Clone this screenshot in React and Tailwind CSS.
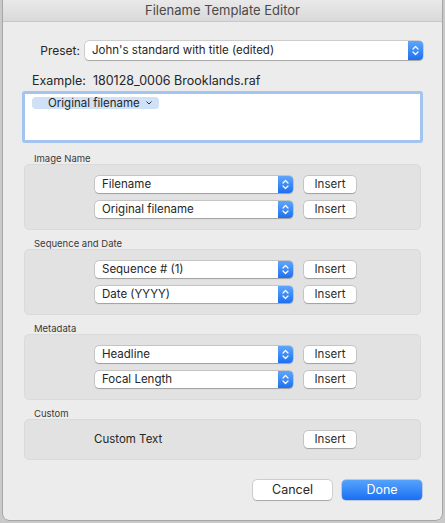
import React from "react";

const groups = [
  { title: "Image Name", rows: ["Filename", "Original filename"] },
  { title: "Sequence and Date", rows: ["Sequence # (1)", "Date (YYYY)"] },
  { title: "Metadata", rows: ["Headline", "Focal Length"] },
];

const Stepper = () => (
  <div className="flex w-[15px] items-center justify-center rounded-r-[4px] bg-gradient-to-b from-[#5ea6fb] to-[#1c6ff0]">
    <svg width="7" height="11" viewBox="0 0 7 11" fill="none">
      <path d="M1 4 L3.5 1.5 L6 4" stroke="white" strokeWidth="1.2" strokeLinecap="round" strokeLinejoin="round" />
      <path d="M1 7 L3.5 9.5 L6 7" stroke="white" strokeWidth="1.2" strokeLinecap="round" strokeLinejoin="round" />
    </svg>
  </div>
);

const Select = ({ label, wide }) => (
  <div
    className={
      "flex items-stretch rounded-[4px] bg-white shadow-[0_0_0_0.5px_rgba(0,0,0,0.22),0_0.5px_1px_rgba(0,0,0,0.2)] " +
      (wide ? "h-[19px] flex-1" : "h-[17px] w-[198px]")
    }
  >
    <span
      className={
        "flex flex-1 items-center truncate pl-[7px] text-[11.5px] text-[#262626] " +
        (wide ? "leading-[19px]" : "leading-[17px]")
      }
    >
      {label}
    </span>
    <Stepper />
  </div>
);

const InsertButton = ({ className = "" }) => (
  <button
    className={
      "h-[17px] w-[52px] rounded-[4px] bg-white text-[11.5px] leading-[17px] text-[#2b2b2b] shadow-[0_0_0_0.5px_rgba(0,0,0,0.22),0_0.5px_1px_rgba(0,0,0,0.2)] " +
      className
    }
  >
    Insert
  </button>
);

const GroupLabel = ({ children }) => (
  <div className="pl-[12px] text-[9.5px] leading-[10px] text-[#3a3a3a]">{children}</div>
);

const App = () => {
  return (
    <div
      className="h-[523px] w-[445px] overflow-hidden bg-[#c9c9c9] px-[3px]"
      style={{ fontFamily: "Inter, 'Noto Sans', sans-serif" }}
    >
      <div className="flex h-[520px] flex-col overflow-hidden rounded-b-[6px] bg-[#ececec] shadow-[0_0_0_0.5px_rgba(0,0,0,0.35)]">
        <div className="flex h-[22px] shrink-0 items-center justify-center border-b border-[#c8c8c8] bg-gradient-to-b from-[#e9e9e9] to-[#d9d9d9] text-[13px] text-[#4a4a4a]">
          Filename Template Editor
        </div>

        <div className="flex flex-col px-[19px]">
          <div className="mt-[19px] flex items-center">
            <span className="w-[63px] pr-[5px] text-right text-[12px] text-[#262626]">Preset:</span>
            <Select label="John's standard with title (edited)" wide />
          </div>

          <div className="mt-[13px] pl-[10px] text-[12.5px] leading-[15px] text-[#262626]">
            Example:&nbsp; 180128_0006 Brooklands.raf
          </div>

          <div className="mt-[3px] h-[52px] rounded-[3px] border-[3px] border-[#a2c4ee] bg-white px-[7px] pt-[3px]">
            <div className="flex">
              <span className="flex h-[12px] items-center gap-[6px] rounded-[4px] bg-[#cfe1f7] pl-[16px] pr-[7px] text-[11.5px] leading-[12px] text-[#262626]">
                Original filename
                <svg width="6" height="4" viewBox="0 0 6 4" fill="none">
                  <path d="M0.8 0.8 L3 3 L5.2 0.8" stroke="#333" strokeWidth="1" strokeLinecap="round" />
                </svg>
              </span>
            </div>
          </div>

          {groups.map((g, i) => (
            <div key={g.title} className={"flex flex-col " + (i === 0 ? "mt-[11px]" : "mt-[9px]")}>
              <GroupLabel>{g.title}</GroupLabel>
              <div className="mx-[2px] flex h-[66px] flex-col justify-center gap-[8px] rounded-[5px] border border-[#dadada] bg-[#e2e2e2]">
                {g.rows.map((r) => (
                  <div key={r} className="flex items-center pl-[70px]">
                    <Select label={r} />
                    <InsertButton className="ml-[11px]" />
                  </div>
                ))}
              </div>
            </div>
          ))}

          <div className="mt-[9px] flex flex-col">
            <GroupLabel>Custom</GroupLabel>
            <div className="mx-[2px] flex h-[41px] items-center rounded-[5px] border border-[#dadada] bg-[#e2e2e2]">
              <span className="ml-[69px] w-[210px] text-[11.5px] text-[#262626]">Custom Text</span>
              <InsertButton />
            </div>
          </div>

          <div className="mt-[20px] flex justify-end gap-[10px] pr-[1px]">
            <button className="h-[20px] w-[79px] rounded-[4px] bg-white text-[12.5px] text-[#262626] shadow-[0_0_0_0.5px_rgba(0,0,0,0.22),0_0.5px_1px_rgba(0,0,0,0.2)]">
              Cancel
            </button>
            <button className="h-[20px] w-[80px] rounded-[4px] bg-gradient-to-b from-[#55a3fc] to-[#1a6ef2] text-[12.5px] text-white shadow-[0_0_0_0.5px_rgba(0,60,180,0.4)]">
              Done
            </button>
          </div>
        </div>
      </div>
    </div>
  );
};

export default App;
